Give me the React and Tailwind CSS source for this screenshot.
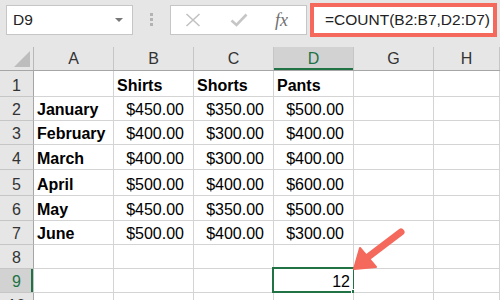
const columns = [
  { label: "A", width: "w-[80px]" },
  { label: "B", width: "w-[80px]" },
  { label: "C", width: "w-[80px]" },
  { label: "D", width: "w-[80px]", active: true },
  { label: "G", width: "w-[80px]" },
  { label: "H", width: "flex-1" },
];

const rows = [
  { n: 1, h: "h-[26px]", bold: true, cells: ["", "Shirts", "Shorts", "Pants"] },
  { n: 2, h: "h-[24px]", cells: ["January", "$450.00", "$350.00", "$500.00"] },
  { n: 3, h: "h-[24px]", cells: ["February", "$400.00", "$300.00", "$400.00"] },
  { n: 4, h: "h-[25px]", cells: ["March", "$400.00", "$300.00", "$400.00"] },
  { n: 5, h: "h-[26px]", cells: ["April", "$500.00", "$400.00", "$600.00"] },
  { n: 6, h: "h-[25px]", cells: ["May", "$450.00", "$350.00", "$500.00"] },
  { n: 7, h: "h-[24px]", cells: ["June", "$500.00", "$400.00", "$300.00"] },
  { n: 8, h: "h-[24px]", cells: [] },
  { n: 9, h: "h-[24px]", cells: ["", "", "", "12"], active: true },
  { n: 10, h: "h-[24px]", cells: [] },
];

function Toolbar() {
  return (
    <div className="flex h-[47px] items-start pl-[6px] pt-[5px]">
      <div className="flex h-[30px] w-[127px] items-center justify-between border border-[#c6c6c6] bg-white pl-[6px] pr-[9px]">
        <span className="text-[15.5px] text-[#222]">D9</span>
        <span className="h-0 w-0 border-x-[4px] border-t-[4px] border-x-transparent border-t-[#777]" />
      </div>
      <div className="flex w-[37px] flex-col items-center gap-[2px] pt-[8px]">
        <span className="h-[3px] w-[3px] bg-[#b3b3b3]" />
        <span className="h-[3px] w-[3px] bg-[#b3b3b3]" />
        <span className="h-[3px] w-[3px] bg-[#b3b3b3]" />
      </div>
      <div className="flex h-[30px] w-[137px] items-center border border-[#c6c6c6] bg-white">
        <svg width="16" height="14" viewBox="0 0 16 14" className="ml-[14px]">
          <path d="M1.5 1 L14.5 13 M14.5 1 L1.5 13" stroke="#c2c2c2" strokeWidth="1.6" fill="none" />
        </svg>
        <svg width="18" height="14" viewBox="0 0 18 14" className="ml-[29px]">
          <path d="M1.5 7.5 L6.5 12 L16.5 1.5" stroke="#c6c6c6" strokeWidth="2.6" fill="none" />
        </svg>
        <span className="ml-[27px] font-['Liberation_Serif',serif] text-[18px] italic text-[#707070]">fx</span>
      </div>
      <div className="ml-[3px] mt-[-2px] flex h-[34px] w-[187px] items-center border-[4px] border-[#f4695b] bg-white pl-[11px]">
        <span className="text-[15.5px] text-[#222]">=COUNT(B2:B7,D2:D7)</span>
      </div>
    </div>
  );
}

function HeaderRow() {
  return (
    <div className="flex h-[24px] border-b border-[#a6a6a6]">
      <div className="relative w-[34px] border-r border-[#b8b8b8]">
        <svg width="34" height="23" viewBox="0 0 34 23" className="absolute left-0 top-0">
          <path d="M30 4 L30 20 L14 20 Z" fill="#bdbdbd" />
        </svg>
      </div>
      {columns.map((col) => (
        <div
          key={col.label}
          className={
            col.active
              ? `${col.width} flex items-center justify-center border-r border-[#c6c6c6] bg-[#d2d2d2] text-[16px] text-[#217346] shadow-[inset_0_-2px_0_#217346]`
              : `${col.width} flex items-center justify-center border-r border-[#c6c6c6] text-[16px] text-[#333]`
          }
        >
          {col.label}
        </div>
      ))}
    </div>
  );
}

function Row({ row }) {
  return (
    <div className={`flex ${row.h}`}>
      <div
        className={
          row.active
            ? "flex w-[34px] items-end justify-center border-b border-r border-[#c6c6c6] bg-[#d2d2d2] pb-[1px] text-[16px] leading-[18px] text-[#217346] shadow-[inset_-2px_0_0_#217346]"
            : "flex w-[34px] items-end justify-center border-b border-r border-b-[#c6c6c6] border-r-[#a6a6a6] pb-[1px] text-[16px] leading-[18px] text-[#333]"
        }
      >
        {row.n}
      </div>
      {columns.map((col, i) => {
        const value = row.cells[i] || "";
        const isLabel = i === 0 || row.bold;
        const selected = row.active && i === 3;
        return (
          <div
            key={col.label}
            className={`relative ${col.width} flex items-end border-b border-r border-[#d4d4d4] bg-white pb-[1px] text-[16px] leading-[18px] text-black ${
              isLabel ? "justify-start pl-[3px] font-bold" : selected ? "justify-end pr-[3px]" : "justify-end pr-[9px]"
            }`}
          >
            {value}
            {selected && (
              <>
                <span className="absolute bottom-[-1px] left-[-2px] right-[-2px] top-[-2px] border-2 border-[#217346]" />
                <span className="absolute bottom-[-3px] right-[-4px] h-[6px] w-[6px] border border-white bg-[#217346]" />
              </>
            )}
          </div>
        );
      })}
    </div>
  );
}

export default function App() {
  return (
    <div className="relative h-[300px] w-[500px] overflow-hidden bg-[#e6e6e6] font-['Liberation_Sans',Arial,sans-serif]">
      <Toolbar />
      <div>
        <HeaderRow />
        {rows.map((row) => (
          <Row key={row.n} row={row} />
        ))}
      </div>
      <svg width="500" height="300" viewBox="0 0 500 300" className="pointer-events-none absolute left-0 top-0">
        <line x1="401" y1="232" x2="368" y2="257" stroke="#f4695b" strokeWidth="7" strokeLinecap="round" />
        <path d="M354 269 L360 248 L376 267 Z" fill="#f4695b" stroke="#f4695b" strokeWidth="2" strokeLinejoin="round" />
      </svg>
    </div>
  );
}
